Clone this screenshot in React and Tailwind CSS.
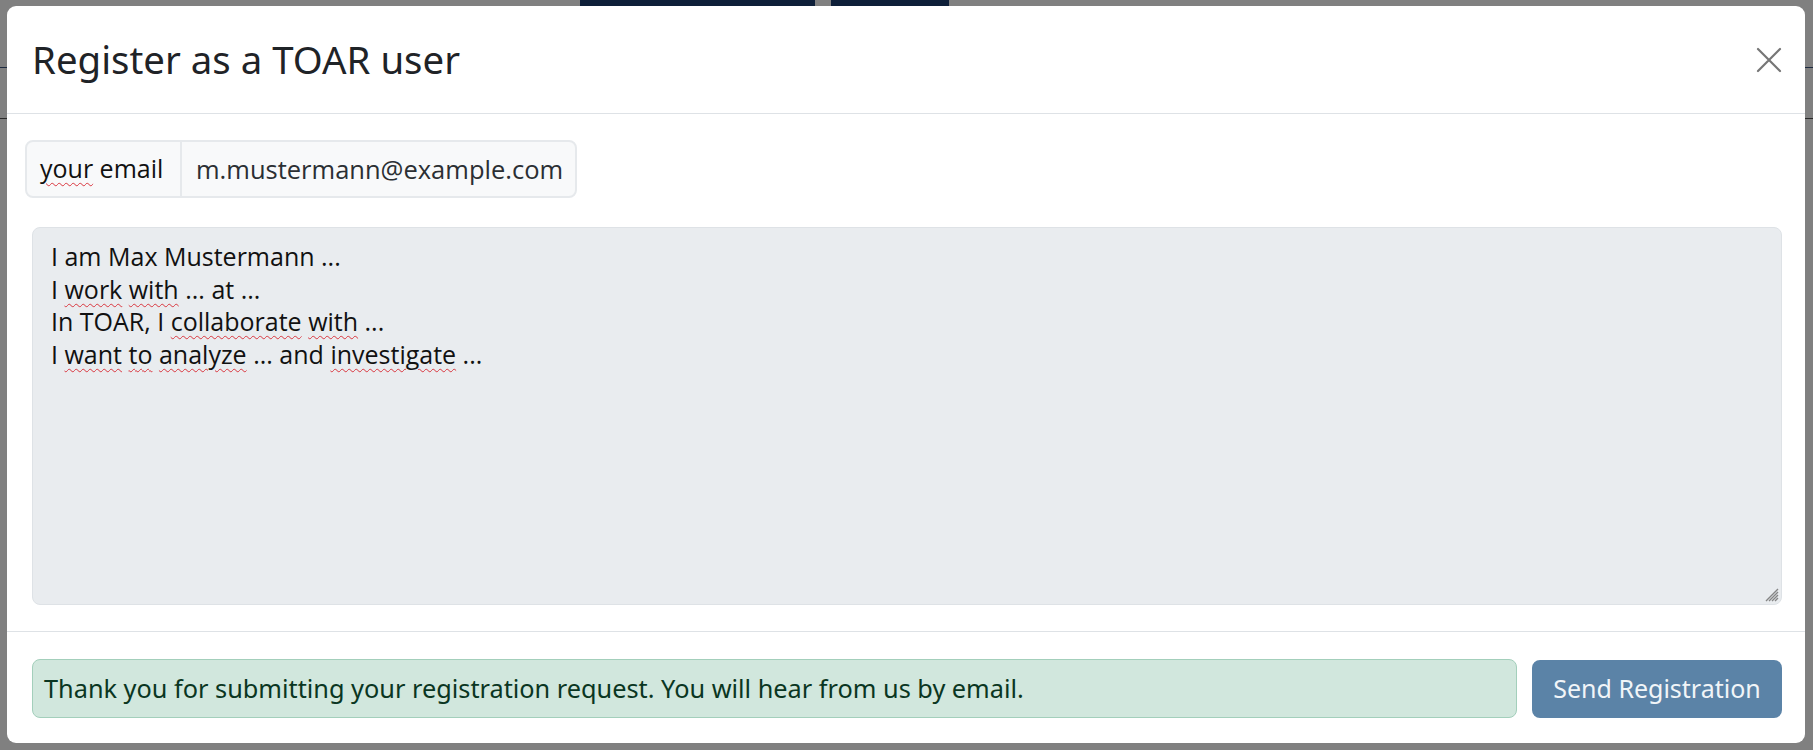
import React from 'react';

const sans = { fontFamily: '"Noto Sans", "Open Sans", sans-serif' };

function Squiggle({ children }) {
    return (
        <span className="underline decoration-wavy decoration-[#d9363e] decoration-[1px] underline-offset-[4px]">
            {children}
        </span>
    );
}

function CloseIcon() {
    return (
        <svg width="26" height="26" viewBox="0 0 26 26" fill="none">
            <path d="M2 2 L24 24 M24 2 L2 24" stroke="#767676" strokeWidth="2.2" strokeLinecap="round" />
        </svg>
    );
}

function ResizeGrip() {
    return (
        <svg width="16" height="16" viewBox="0 0 16 16" className="absolute bottom-[2px] right-[2px]">
            <path d="M15 3 L3 15 M15 6 L6 15 M15 9 L9 15 M15 12 L12 15" stroke="#858585" strokeWidth="1.4" />
        </svg>
    );
}

export default function App() {
    return (
        <div className="relative h-[750px] w-full overflow-hidden bg-[#808080]" style={sans}>
            {/* page behind the backdrop */}
            <div className="absolute left-[580px] top-0 h-[6px] w-[235px] bg-[#0e1f39]" />
            <div className="absolute left-[831px] top-0 h-[6px] w-[118px] bg-[#0e1f39]" />
            <div className="absolute left-0 top-[67px] h-[1px] w-[7px] bg-[#1d2a40]" />
            <div className="absolute left-0 top-[118px] h-[1px] w-[7px] bg-[#2a2a2a]" />
            <div className="absolute right-0 top-[67px] h-[1px] w-[8px] bg-[#1d2a40]" />
            <div className="absolute right-0 top-[118px] h-[1px] w-[8px] bg-[#2a2a2a]" />

            <div className="relative ml-[7px] mt-[6px] flex h-[737px] w-[1798px] flex-col rounded-[9px] bg-white">
                <div className="flex h-[108px] items-center justify-between border-b border-[#dee2e6] pl-[25px] pr-[16px]">
                    <h1 className="text-[38.4px] font-normal leading-[57px] text-[#1f2327]">Register as a TOAR user</h1>
                    <button className="flex h-[40px] w-[40px] items-center justify-center">
                        <CloseIcon />
                    </button>
                </div>

                <div className="flex flex-col pb-[26px] pl-[18px] pr-[23px] pt-[26px]" style={{ fontFamily: '"Open Sans", sans-serif' }}>
                    <div className="flex h-[58px] w-[552px] rounded-[8px] border-2 border-[#e6e9ec] bg-[#f8f9fa] text-[25px] text-[#111]">
                        <div className="flex w-[155px] items-center border-r-2 border-[#e6e9ec] pl-[13px]">
                            <Squiggle>your</Squiggle>&nbsp;email
                        </div>
                        <div className="flex flex-1 items-center pl-[14px] text-[25.5px] text-[#2b2f33]">m.mustermann@example.com</div>
                    </div>

                    <div className="relative ml-[7px] mt-[29px] h-[378px] rounded-[8px] border border-[#dee2e6] bg-[#e9ecef] px-[18px] py-[9px] text-[25px] leading-[32.7px] text-[#111]">
                        <div className="pt-[3px]">I am Max Mustermann ...</div>
                        <div>I <Squiggle>work</Squiggle> <Squiggle>with</Squiggle> ... at ...</div>
                        <div>In TOAR, I <Squiggle>collaborate</Squiggle> <Squiggle>with</Squiggle> ...</div>
                        <div>I <Squiggle>want</Squiggle> <Squiggle>to</Squiggle> <Squiggle>analyze</Squiggle> ... and <Squiggle>investigate</Squiggle> ...</div>
                        <ResizeGrip />
                    </div>
                </div>

                <div className="flex items-center gap-[15px] border-t border-[#dee2e6] pb-[25px] pl-[25px] pr-[23px] pt-[27px]">
                    <div className="flex h-[59px] flex-1 items-center rounded-[8px] border border-[#a3cfbb] bg-[#d1e7dd] pl-[11px] text-[25.3px] text-[#0a3622]">
                        Thank you for submitting your registration request. You will hear from us by email.
                    </div>
                    <button className="flex h-[58px] w-[250px] items-center justify-center rounded-[8px] bg-[#5b83a7] text-[25px] text-[#f1f5f8]">
                        Send Registration
                    </button>
                </div>
            </div>
        </div>
    );
}
